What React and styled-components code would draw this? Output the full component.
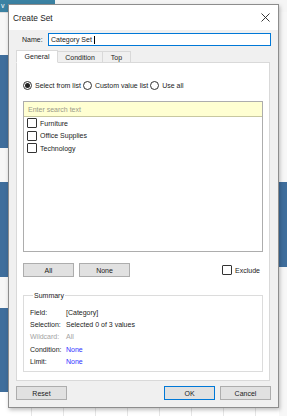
import { Fragment } from 'react';
import styled, { createGlobalStyle } from 'styled-components';

const GlobalStyle = createGlobalStyle`
  * { box-sizing: border-box; }
  html, body { margin: 0; padding: 0; }
  body {
    width: 287px;
    height: 416px;
    overflow: hidden;
    background: #ffffff;
    font-family: "Liberation Sans", Arial, sans-serif;
    color: #1b1b1b;
  }
`;

const Backdrop = styled.div`
  position: relative;
  width: 287px;
  height: 416px;
  display: flex;
  flex-direction: column;
`;

const TopBar = styled.div`
  height: 12px;
  display: flex;
  background: #f5f5f5;
`;

const TopTab = styled.div`
  width: 55px;
  background: #3b82a3;
  color: #fff;
  font-size: 7px;
  line-height: 12px;
  padding-left: 1px;
`;

const Sheet = styled.div`
  flex: 1;
  display: flex;
  background-color: #fff;
  background-image: repeating-linear-gradient(
    90deg,
    transparent 0,
    transparent 31px,
    #e6e6e6 31px,
    #e6e6e6 32px
  );
`;

const Strip = styled.div`
  width: ${p => p.$w}px;
  display: flex;
  flex-direction: column;
  background: #fff;
`;

const Segment = styled.div`
  height: ${p => p.$h}px;
  flex-shrink: 0;
  background: ${p => (p.$blue ? '#3f6e9c' : '#f7f7f7')};
  border-top: ${p => (p.$line ? '1px solid #dedede' : 'none')};
`;

const Spacer = styled.div`
  flex: 1;
`;

const Dialog = styled.div`
  position: absolute;
  left: 8px;
  top: 4px;
  width: 271px;
  height: 404px;
  background: #f0f0f0;
  border: 1px solid #8d8d8d;
  box-shadow: 1px 2px 4px rgba(0, 0, 0, 0.25);
  display: flex;
  flex-direction: column;
`;

const TitleBar = styled.div`
  height: 25px;
  background: #fff;
  display: flex;
  align-items: center;
  justify-content: space-between;
  padding: 0 8px 0 4px;
  font-size: 8.3px;
`;

const CloseIcon = () => (
  <svg width="9" height="9" viewBox="0 0 9 9">
    <path d="M0.5 0.5 L8.5 8.5 M8.5 0.5 L0.5 8.5" stroke="#222" strokeWidth="0.9" />
  </svg>
);

const Body = styled.div`
  flex: 1;
  display: flex;
  flex-direction: column;
  padding: 3px 7px 7px 7px;
  font-size: 7px;
`;

const NameRow = styled.div`
  display: flex;
  align-items: center;
  height: 13px;
`;

const NameLabel = styled.span`
  width: 32px;
  padding-left: 6px;
`;

const NameInput = styled.div`
  flex: 1;
  height: 13px;
  border: 1px solid #0078d7;
  background: #fff;
  display: flex;
  align-items: center;
  padding-left: 2px;
`;

const Caret = styled.span`
  display: inline-block;
  width: 1px;
  height: 8px;
  background: #000;
  margin-left: 2px;
`;

const Tabs = styled.div`
  display: flex;
  margin-top: 3px;
  height: 13px;
  align-items: flex-end;
`;

const Tab = styled.div`
  width: ${p => p.$w}px;
  height: ${p => (p.$active ? 13 : 12)}px;
  border: 1px solid #d9d9d9;
  border-bottom: ${p => (p.$active ? '1px solid #fff' : '1px solid #d9d9d9')};
  border-left: ${p => (p.$first || p.$active ? '1px solid #d9d9d9' : 'none')};
  background: ${p => (p.$active ? '#fff' : '#f0f0f0')};
  display: flex;
  align-items: center;
  justify-content: center;
  margin-bottom: -1px;
  position: relative;
`;

const Panel = styled.div`
  flex: 1;
  background: #fff;
  border: 1px solid #d9d9d9;
  margin-right: 1px;
  padding: 17px 6px 8px 6px;
  display: flex;
  flex-direction: column;
`;

const RadioRow = styled.div`
  display: flex;
  align-items: center;
  height: 10px;
`;

const Radio = styled.span`
  width: 9px;
  height: 9px;
  border-radius: 50%;
  border: 1px solid #333;
  display: inline-flex;
  align-items: center;
  justify-content: center;
  margin: 0 3px 0 ${p => (p.$first ? 0 : 2)}px;
  &::after {
    content: '';
    width: 5px;
    height: 5px;
    border-radius: 50%;
    background: ${p => (p.$checked ? '#222' : 'transparent')};
  }
`;

const ListBox = styled.div`
  margin-top: 11px;
  flex: 0 0 151px;
  border: 1px solid #adadad;
  display: flex;
  flex-direction: column;
`;

const Search = styled.div`
  height: 15px;
  background: #ffffd2;
  border-bottom: 1px solid #c8c8a0;
  color: #9a9a8a;
  display: flex;
  align-items: center;
  padding-left: 4px;
`;

const Item = styled.div`
  height: 12.5px;
  display: flex;
  align-items: center;
  padding-left: 3px;
`;

const Check = styled.span`
  width: 10px;
  height: 10px;
  border: 1px solid #333;
  border-radius: 1px;
  background: #fff;
  margin-right: 3px;
  flex-shrink: 0;
`;

const ButtonRow = styled.div`
  display: flex;
  align-items: center;
  gap: 5px;
  margin-top: 11px;
  height: 14px;
`;

const Button = styled.div`
  width: 51px;
  height: 14px;
  background: #e1e1e1;
  border: 1px solid ${p => (p.$primary ? '#0078d7' : '#adadad')};
  display: flex;
  align-items: center;
  justify-content: center;
`;

const ExcludeLabel = styled.div`
  margin-left: auto;
  margin-right: 3px;
  display: flex;
  align-items: center;
`;

const Summary = styled.fieldset`
  margin: 15px 0 0 0;
  padding: 7px 6px 3px 6px;
  border: 1px solid #dcdcdc;
  min-width: 0;
`;

const Legend = styled.legend`
  padding: 0 1px;
  margin-left: 3px;
  font-size: 7px;
`;

const SummaryGrid = styled.div`
  display: grid;
  grid-template-columns: 36px 1fr;
  grid-auto-rows: 12.4px;
  align-items: center;
`;

const Cell = styled.span`
  color: ${p => (p.$tone === 'muted' ? '#a3a3a3' : p.$tone === 'link' ? '#3030ff' : '#1b1b1b')};
`;

const Footer = styled.div`
  display: flex;
  align-items: center;
  margin-top: 5px;
  height: 14px;
  gap: 5px;
`;

const FooterGap = styled.div`
  flex: 1;
`;

const summary = [
  ['Field:', '[Category]', null, null],
  ['Selection:', 'Selected 0 of 3 values', null, null],
  ['Wildcard:', 'All', 'muted', 'muted'],
  ['Condition:', 'None', null, 'link'],
  ['Limit:', 'None', null, 'link'],
];

export default function App() {
  return (
    <Backdrop>
      <GlobalStyle />
      <TopBar>
        <TopTab>v</TopTab>
      </TopBar>
      <Sheet>
        <Strip $w={8}>
          <Segment $h={43} $line />
          <Segment $h={93} $blue />
          <Segment $h={34} />
          <Segment $h={95} $blue />
          <Segment $h={31} />
          <Segment $h={84} $blue />
        </Strip>
        <Spacer />
        <Strip $w={8}>
          <Segment $h={170} />
          <Segment $h={85} $blue />
          <Segment $h={149} />
        </Strip>
      </Sheet>

      <Dialog>
        <TitleBar>
          <span>Create Set</span>
          <CloseIcon />
        </TitleBar>
        <Body>
          <NameRow>
            <NameLabel>Name:</NameLabel>
            <NameInput>
              Category Set<Caret />
            </NameInput>
          </NameRow>
          <Tabs>
            <Tab $w={42} $active $first>General</Tab>
            <Tab $w={45}>Condition</Tab>
            <Tab $w={28}>Top</Tab>
          </Tabs>
          <Panel>
            <RadioRow>
              <Radio $first $checked />
              Select from list
              <Radio />
              Custom value list
              <Radio />
              Use all
            </RadioRow>
            <ListBox>
              <Search>Enter search text</Search>
              {['Furniture', 'Office Supplies', 'Technology'].map(name => (
                <Item key={name}>
                  <Check />
                  {name}
                </Item>
              ))}
            </ListBox>
            <ButtonRow>
              <Button>All</Button>
              <Button>None</Button>
              <ExcludeLabel>
                <Check />
                Exclude
              </ExcludeLabel>
            </ButtonRow>
            <Summary>
              <Legend>Summary</Legend>
              <SummaryGrid>
                {summary.map(([label, value, lt, vt]) => (
                  <Fragment key={label}>
                    <Cell $tone={lt}>{label}</Cell>
                    <Cell $tone={vt}>{value}</Cell>
                  </Fragment>
                ))}
              </SummaryGrid>
            </Summary>
          </Panel>
          <Footer>
            <Button>Reset</Button>
            <FooterGap />
            <Button $primary>OK</Button>
            <Button>Cancel</Button>
          </Footer>
        </Body>
      </Dialog>
    </Backdrop>
  );
}
